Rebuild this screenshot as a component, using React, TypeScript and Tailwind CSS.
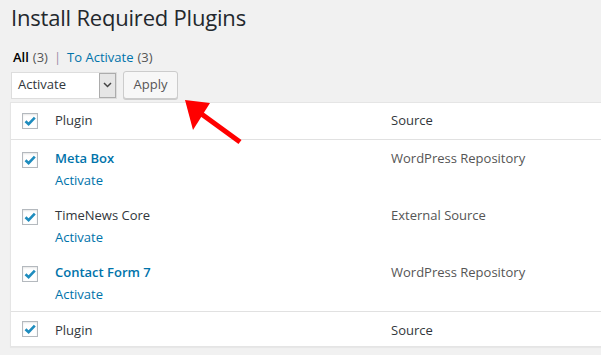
import React from 'react';

const font = { fontFamily: '"Open Sans", "Noto Sans", Arial, sans-serif' };

function Check() {
  return (
    <span className="flex h-4 w-4 shrink-0 items-center justify-center border border-[#b4b9be] bg-white shadow-[inset_0_1px_2px_rgba(0,0,0,0.1)]">
      <svg width="14" height="14" viewBox="0 0 14 14" aria-hidden>
        <path d="M2.5 7.2 L5.6 10.2 L11.8 3.6" fill="none" stroke="#1e8cbe" strokeWidth="2.6" strokeLinejoin="miter" />
      </svg>
    </span>
  );
}

const rows = [
  { name: 'Meta Box', link: true, source: 'WordPress Repository' },
  { name: 'TimeNews Core', link: false, source: 'External Source' },
  { name: 'Contact Form 7', link: true, source: 'WordPress Repository' },
];

function HeadRow({ top }: { top?: boolean }) {
  return (
    <div className={`flex items-center text-[13px] text-[#32373c] ${top ? 'h-[37px] border-b border-[#e1e1e1]' : 'h-[35px] border-t border-[#e1e1e1]'}`}>
      <div className="w-[44px] pl-[11px]">
        <Check />
      </div>
      <div className={`w-[336px] ${top ? '' : 'pt-[3px]'}`}>Plugin</div>
      <div className={top ? '' : 'pt-[3px]'}>Source</div>
    </div>
  );
}

export default function App() {
  return (
    <div className="relative h-[355px] w-[601px] overflow-hidden bg-[#f1f1f1] text-[#23282d]" style={font}>
      <div className="pl-[10px] pt-[3px]">
        <h1 className="pl-px text-[22px] font-normal leading-[29px] tracking-[-0.2px] text-[#23282d]">Install Required Plugins</h1>
        <div className="mt-[15px] flex items-center pl-[3px] text-[13px] leading-[20px] text-[#555]">
          <span className="font-semibold text-black">All</span>
          <span className="ml-[4px]">(3)</span>
          <span className="mx-[6px] text-[#a08aa8]">|</span>
          <span className="text-[#0073aa]">To Activate</span>
          <span className="ml-[4px]">(3)</span>
        </div>
        <div className="mt-[4px] flex h-[28px] items-center gap-[6px] pl-px">
          <div className="flex h-[27px] w-[106px] items-stretch border border-[#ddd] bg-white">
            <span className="flex flex-1 items-center pl-[6px] text-[13px] text-[#32373c]">Activate</span>
            <span className="flex w-[17px] items-center justify-center border border-[#acacac] bg-[#e6e6e6]">
              <svg width="9" height="6" viewBox="0 0 9 6" aria-hidden>
                <path d="M1 1 L4.5 4.5 L8 1" fill="none" stroke="#444" strokeWidth="1.5" />
              </svg>
            </span>
          </div>
          <button className="flex h-[28px] w-[55px] items-center justify-center rounded-[3px] border border-[#ccc] bg-[#f7f7f7] text-[13px] text-[#555] shadow-[0_1px_0_#ccc]">
            Apply
          </button>
        </div>
        <div className="mt-[3px] w-[640px] border border-[#e5e5e5] bg-white shadow-[0_1px_1px_rgba(0,0,0,0.04)]">
          <HeadRow top />
          {rows.map(r => (
            <div key={r.name} className="flex h-[57px] items-start pt-[11px] text-[13px]">
              <div className="w-[44px] pl-[11px] pt-px">
                <Check />
              </div>
              <div className="-mt-[2px] w-[336px] leading-[18px]">
                <div className={r.link ? 'font-semibold text-[#0073aa]' : 'text-[#32373c]'}>{r.name}</div>
                <div className="mt-[4px] text-[#0073aa]">Activate</div>
              </div>
              <div className="-mt-[2px] leading-[18px] text-[#555]">{r.source}</div>
            </div>
          ))}
          <HeadRow />
        </div>
      </div>
      <svg className="absolute left-0 top-0" width="601" height="355" aria-hidden>
        <line x1="240" y1="142" x2="196" y2="110" stroke="#ff0000" strokeWidth="5" />
        <polygon points="185,100 210,103 193,130" fill="#ff0000" />
      </svg>
    </div>
  );
}
